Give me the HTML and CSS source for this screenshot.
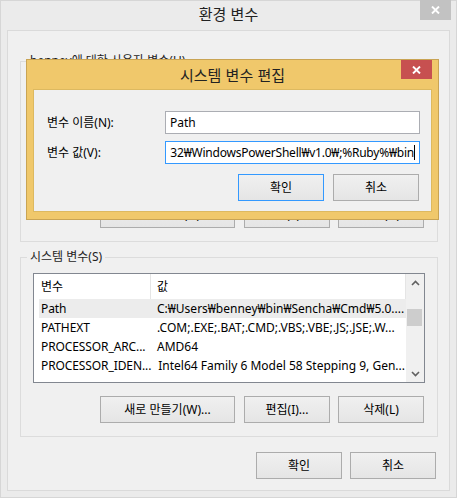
FILE: index.html
```html
<!DOCTYPE html>
<html lang="ko">
<head>
<meta charset="utf-8">
<title>환경 변수</title>
<link rel="stylesheet" href="styles.css">
</head>
<body>
<div class="window">
  <div class="titlebar">
    <span class="title">환경 변수</span>
    <span class="close close-gray">
      <svg width="9" height="8" viewBox="0 0 9 8"><path d="M1 0.5 L8 7.5 M8 0.5 L1 7.5" stroke="#fff" stroke-width="1.9" fill="none"/></svg>
    </span>
  </div>
  <div class="panel">
    <div class="group group-user">
      <span class="group-title">benney에 대한 사용자 변수(U)</span>
      <div class="listview">
        <div class="lv-main"></div>
        <div class="scrollbar"></div>
      </div>
      <div class="btn-row">
        <button class="btn btn-wide">새로 만들기(N)...</button>
        <button class="btn btn-mid">편집(E)...</button>
        <button class="btn">삭제(D)</button>
      </div>
    </div>
    <div class="group group-system">
      <span class="group-title">시스템 변수(S)</span>
      <div class="listview">
        <div class="lv-main">
          <div class="lv-header"><span class="hc1">변수</span><span class="hc2">값</span></div>
          <div class="lv-row hot"><span class="c1">Path</span><span class="c2">C:₩Users₩benney₩bin₩Sencha₩Cmd₩5.0....</span></div>
          <div class="lv-row"><span class="c1">PATHEXT</span><span class="c2">.COM;.EXE;.BAT;.CMD;.VBS;.VBE;.JS;.JSE;.W...</span></div>
          <div class="lv-row"><span class="c1">PROCESSOR_ARC...</span><span class="c2">AMD64</span></div>
          <div class="lv-row"><span class="c1">PROCESSOR_IDEN...</span><span class="c2">Intel64 Family 6 Model 58 Stepping 9, Gen...</span></div>
        </div>
        <div class="scrollbar">
          <span class="sb-arrow">
            <svg width="9" height="6" viewBox="0 0 9 6"><path d="M1 5 L4.5 1.5 L8 5" stroke="#606060" stroke-width="1.6" fill="none"/></svg>
          </span>
          <span class="sb-track"><span class="sb-thumb"></span></span>
          <span class="sb-arrow">
            <svg width="9" height="6" viewBox="0 0 9 6"><path d="M1 1 L4.5 4.5 L8 1" stroke="#606060" stroke-width="1.6" fill="none"/></svg>
          </span>
        </div>
      </div>
      <div class="btn-row">
        <button class="btn btn-wide">새로 만들기(W)...</button>
        <button class="btn btn-mid">편집(I)...</button>
        <button class="btn">삭제(L)</button>
      </div>
    </div>
    <div class="footer">
      <button class="btn">확인</button>
      <button class="btn">취소</button>
    </div>
  </div>

  <div class="edit-dialog">
    <div class="ed-titlebar">
      <span class="ed-title">시스템 변수 편집</span>
      <span class="close close-red">
        <svg width="9" height="8" viewBox="0 0 9 8"><path d="M1 0.5 L8 7.5 M8 0.5 L1 7.5" stroke="#fff" stroke-width="1.9" fill="none"/></svg>
      </span>
    </div>
    <div class="ed-body">
      <div class="ed-row">
        <span class="ed-label">변수 이름(N):</span>
        <div class="ed-input">Path</div>
      </div>
      <div class="ed-row">
        <span class="ed-label">변수 값(V):</span>
        <div class="ed-input focused"><span class="ed-value">32₩WindowsPowerShell₩v1.0₩;%Ruby%₩bin</span><span class="caret"></span></div>
      </div>
      <div class="ed-buttons">
        <button class="btn default">확인</button>
        <button class="btn">취소</button>
      </div>
    </div>
  </div>
</div>
</body>
</html>
```

FILE: styles.css
```css
html, body {
  margin: 0;
  padding: 0;
}

body {
  font-family: "Noto Sans", "Noto Sans CJK KR", sans-serif;
  font-size: 12px;
  color: #000;
  background: #f2f2f2;
}

.window {
  position: relative;
  width: 457px;
  height: 498px;
  box-sizing: border-box;
  background: #ebebeb;
  border: 1px solid #d6d6d6;
  display: flex;
  flex-direction: column;
}

.titlebar {
  height: 29px;
  display: grid;
  grid-template-columns: 1fr auto 1fr;
  align-items: start;
}

.title {
  grid-column: 2;
  font-size: 15px;
  line-height: 26px;
  color: #222;
  font-family: "Noto Sans CJK KR", sans-serif;
}

.close {
  display: flex;
  align-items: center;
  justify-content: center;
}

.close-gray {
  grid-column: 3;
  justify-self: end;
  width: 31px;
  height: 20px;
  margin-top: -1px;
  margin-right: 5px;
  background: #c2c2c2;
}

.panel {
  flex: 1;
  margin: 0 6px 6px 6px;
  border: 1px solid #dadada;
  background: #f0f0f0;
  display: flex;
  flex-direction: column;
}

.group {
  position: relative;
  border: 1px solid #dcdcdc;
  margin: 0 11px 0 12px;
  padding: 15px 12px 13px 12px;
  display: flex;
  flex-direction: column;
}

.group-user {
  margin-top: 30px;
}

.group-user .btn-row {
  margin-top: 14px;
}

.group-system {
  margin-top: 15px;
}

.group-title {
  position: absolute;
  top: -9px;
  left: 6px;
  padding: 0 3px;
  line-height: 16px;
  background: #f0f0f0;
  color: #1e1e1e;
}

.listview {
  height: 110px;
  box-sizing: border-box;
  border: 1px solid #828790;
  background: #fff;
  display: flex;
}

.lv-main {
  flex: 1;
  overflow: hidden;
}

.lv-header {
  height: 25px;
  display: flex;
  align-items: center;
}

.hc1 {
  width: 109px;
  padding-left: 7px;
  line-height: 25px;
  border-right: 1px solid #e5e5e5;
}

.hc2 {
  flex: 1;
  padding-left: 6px;
  line-height: 25px;
  border-right: 1px solid #e5e5e5;
}

.lv-row {
  height: 19px;
  margin-left: 5px;
  display: flex;
  white-space: nowrap;
  line-height: 19px;
}

.lv-row.hot {
  background: #ececec;
}

.c1 {
  flex: 0 0 109px;
  padding-left: 2px;
  letter-spacing: -0.1px;
}

.c2 {
  flex: 1;
  min-width: 0;
  padding-left: 7px;
}

.scrollbar {
  width: 18px;
  background: #f0f0f0;
  display: flex;
  flex-direction: column;
}

.sb-arrow {
  height: 17px;
  display: flex;
  align-items: center;
  justify-content: center;
}

.sb-track {
  flex: 1;
  padding-top: 18px;
  display: flex;
  flex-direction: column;
}

.sb-thumb {
  height: 17px;
  margin: 0 2px 0 1px;
  background: #cdcdcd;
}

.btn-row {
  margin-top: 13px;
  margin-right: 1px;
  display: flex;
  justify-content: flex-end;
  gap: 8px;
}

.btn {
  width: 86px;
  height: 27px;
  box-sizing: border-box;
  padding: 0;
  border: 1px solid #acacac;
  background: linear-gradient(#f0f0f0, #e5e5e5);
  font-family: "Noto Sans", "Noto Sans CJK KR", sans-serif;
  font-size: 12px;
  color: #000;
  line-height: 25px;
}

.btn-wide {
  width: 135px;
}

.btn-row .btn-mid {
  margin-left: 1px;
}

.footer {
  margin: 15px 13px 0 0;
  display: flex;
  justify-content: flex-end;
  gap: 8px;
}

.btn.default {
  border-color: #3399ff;
}

/* overlay dialog */
.edit-dialog {
  position: absolute;
  left: 25px;
  top: 58px;
  width: 413px;
  height: 161px;
  box-sizing: border-box;
  border: 1px solid #c9a454;
  background: #f0c86b;
  padding: 0 6px 7px 6px;
  display: flex;
  flex-direction: column;
}

.ed-titlebar {
  height: 29px;
  display: grid;
  grid-template-columns: 1fr auto 1fr;
  align-items: start;
}

.ed-title {
  grid-column: 2;
  font-size: 15px;
  line-height: 29px;
  color: #222;
  font-family: "Noto Sans CJK KR", sans-serif;
}

.close-red {
  grid-column: 3;
  justify-self: end;
  width: 31px;
  height: 19px;
  background: #c75050;
}

.ed-body {
  flex: 1;
  background: #f0f0f0;
  border: 1px solid #ddb960;
  padding: 21px 11px 0 13px;
  display: flex;
  flex-direction: column;
  gap: 7px;
}

.ed-row {
  display: flex;
  align-items: center;
  height: 23px;
}

.ed-label {
  width: 118px;
  line-height: 16px;
}

.ed-input {
  width: 255px;
  height: 23px;
  box-sizing: border-box;
  border: 1px solid #abadb3;
  background: #fff;
  padding: 0 4px 0 4px;
  line-height: 21px;
  white-space: nowrap;
  overflow: hidden;
  display: flex;
  align-items: center;
}

.ed-input.focused {
  border-color: #3399ff;
  justify-content: flex-end;
  padding-left: 2px;
}

.ed-value {
  flex-shrink: 0;
  letter-spacing: -0.22px;
}

.caret {
  flex-shrink: 0;
  width: 1px;
  height: 15px;
  background: #000;
}

.ed-buttons {
  margin-top: 3px;
  margin-right: 1px;
  display: flex;
  justify-content: flex-end;
  gap: 9px;
}
```
